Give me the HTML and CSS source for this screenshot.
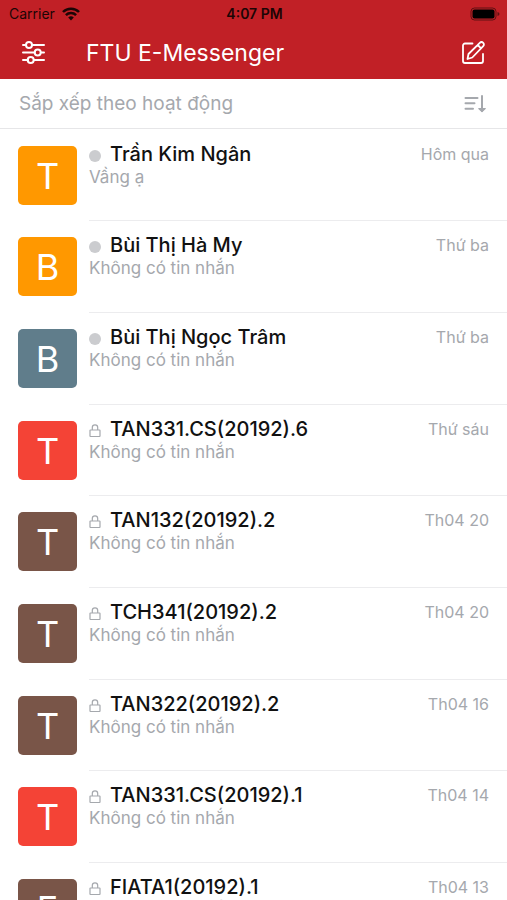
FILE: index.html
```html
<!DOCTYPE html>
<html lang="vi">
<head>
    <meta charset="UTF-8">
    <meta name="viewport" content="width=device-width, initial-scale=1.0">
    <title>FTU E-Messenger</title>
    <link rel="stylesheet" href="styles.css">
</head>
<body>

    <!-- Lock icon shared by the group chats -->
    <svg class="sprite" aria-hidden="true">
        <symbol id="lock" viewBox="0 0 12 14">
            <path d="M1.500 6h9a.5.5 0 0 1 .5.5v5.500a.5.5 0 0 1-.5.5h-9a.5.5 0 0 1-.5-.5V6.500a.5.5 0 0 1 .5-.5zM3.300 6V3.500a2.700 2.700 0 0 1 5.400 0V6" fill="none" stroke="currentColor" stroke-width="1.200"/>
        </symbol>
    </svg>

    <div class="app">
        <!-- Top Bar -->
        <header class="top">
            <div class="status">
                <div class="carrier">
                    Carrier
                    <svg width="18" height="14" viewBox="0 0 18 14">
                        <path d="M1 5a11.200 11.200 0 0 1 16 0M3.900 8.200a7.200 7.200 0 0 1 10.200 0" fill="none" stroke="currentColor" stroke-width="2.500"/>
                        <path d="M9 13.500L6.200 10.600a4 4 0 0 1 5.600 0z" fill="currentColor"/>
                    </svg>
                </div>
                <div class="time">4:07 PM</div>
                <div class="battery">
                    <svg width="30" height="14" viewBox="0 0 30 14">
                        <rect x="1" y="1" width="25" height="12" rx="3.500" fill="none" stroke="currentColor" opacity=".5"/>
                        <rect x="2.500" y="2.500" width="22" height="9" rx="2" fill="currentColor"/>
                        <path d="M27.500 5v4q2-.6 2-2t-2-2z" fill="currentColor" opacity=".5"/>
                    </svg>
                </div>
            </div>
            <div class="nav">
                <button class="icon-btn" aria-label="Bộ lọc">
                    <svg width="24" height="24" viewBox="0 0 24 24" fill="none" stroke="currentColor" stroke-width="2" stroke-linecap="round">
                        <path d="M1 4H4M10 4h12M1 11.500H12.500M19 11.500h3M1 19H6M12 19h10"/>
                        <circle cx="7" cy="4" r="3"/>
                        <circle cx="15.700" cy="11.500" r="3"/>
                        <circle cx="8.700" cy="19" r="3"/>
                    </svg>
                </button>
                <h1>FTU E-Messenger</h1>
                <button class="icon-btn" aria-label="Tin nhắn mới">
                    <svg width="24" height="24" viewBox="0 0 24 24" fill="none" stroke="currentColor" stroke-width="1.800" stroke-linejoin="round" stroke-linecap="round">
                        <path d="M11.500 2.500H4a2 2 0 0 0-2 2V20a2 2 0 0 0 2 2H20a2 2 0 0 0 2-2v-7"/>
                        <path d="M6.500 18l1-5L18.800 1.800a2.400 2.400 0 0 1 3.400 3.400L11.300 16.500zM16.700 4l3.400 3.400"/>
                    </svg>
                </button>
            </div>
        </header>

        <!-- Sort Bar -->
        <div class="sort">
            <span id="sortLabel">Sắp xếp theo hoạt động</span>
            <button class="icon-btn" aria-labelledby="sortLabel">
                <svg width="24" height="24" viewBox="0 0 24 24" fill="none" stroke="currentColor" stroke-width="2" stroke-linecap="round" stroke-linejoin="round">
                    <path d="M2.500 6h12M2.500 11.300h9M2.500 16.700h7.500M19 4v15"/>
                    <path d="M15.800 16.500l3.200 3.200 3.200-3.200z" fill="currentColor" stroke-width="1.200"/>
                </svg>
            </button>
        </div>

        <!-- Chat List -->
        <ul class="chats">
            <li>
                <a class="chat" href="#">
                    <span class="avatar orange">T</span>
                    <span class="info">
                        <span class="line"><span class="mark"><span class="dot"></span></span><span class="name">Trần Kim Ngân</span><span class="date">Hôm qua</span></span>
                        <span class="message">Vầng ạ</span>
                    </span>
                </a>
            </li>
            <li>
                <a class="chat" href="#">
                    <span class="avatar orange">B</span>
                    <span class="info">
                        <span class="line"><span class="mark"><span class="dot"></span></span><span class="name">Bùi Thị Hà My</span><span class="date">Thứ ba</span></span>
                        <span class="message">Không có tin nhắn</span>
                    </span>
                </a>
            </li>
            <li>
                <a class="chat" href="#">
                    <span class="avatar slate">B</span>
                    <span class="info">
                        <span class="line"><span class="mark"><span class="dot"></span></span><span class="name">Bùi Thị Ngọc Trâm</span><span class="date">Thứ ba</span></span>
                        <span class="message">Không có tin nhắn</span>
                    </span>
                </a>
            </li>
            <li>
                <a class="chat" href="#">
                    <span class="avatar red">T</span>
                    <span class="info">
                        <span class="line"><span class="mark"><svg class="lock"><use href="#lock"/></svg></span><span class="name">TAN331.CS(20192).6</span><span class="date">Thứ sáu</span></span>
                        <span class="message">Không có tin nhắn</span>
                    </span>
                </a>
            </li>
            <li>
                <a class="chat" href="#">
                    <span class="avatar brown">T</span>
                    <span class="info">
                        <span class="line"><span class="mark"><svg class="lock"><use href="#lock"/></svg></span><span class="name">TAN132(20192).2</span><span class="date">Th04 20</span></span>
                        <span class="message">Không có tin nhắn</span>
                    </span>
                </a>
            </li>
            <li>
                <a class="chat" href="#">
                    <span class="avatar brown">T</span>
                    <span class="info">
                        <span class="line"><span class="mark"><svg class="lock"><use href="#lock"/></svg></span><span class="name">TCH341(20192).2</span><span class="date">Th04 20</span></span>
                        <span class="message">Không có tin nhắn</span>
                    </span>
                </a>
            </li>
            <li>
                <a class="chat" href="#">
                    <span class="avatar brown">T</span>
                    <span class="info">
                        <span class="line"><span class="mark"><svg class="lock"><use href="#lock"/></svg></span><span class="name">TAN322(20192).2</span><span class="date">Th04 16</span></span>
                        <span class="message">Không có tin nhắn</span>
                    </span>
                </a>
            </li>
            <li>
                <a class="chat" href="#">
                    <span class="avatar red">T</span>
                    <span class="info">
                        <span class="line"><span class="mark"><svg class="lock"><use href="#lock"/></svg></span><span class="name">TAN331.CS(20192).1</span><span class="date">Th04 14</span></span>
                        <span class="message">Không có tin nhắn</span>
                    </span>
                </a>
            </li>
            <li>
                <a class="chat" href="#">
                    <span class="avatar brown">F</span>
                    <span class="info">
                        <span class="line"><span class="mark"><svg class="lock"><use href="#lock"/></svg></span><span class="name">FIATA1(20192).1</span><span class="date">Th04 13</span></span>
                        <span class="message">Không có tin nhắn</span>
                    </span>
                </a>
            </li>
        </ul>
    </div>

</body>
</html>
```
FILE: styles.css
```css
/* General Styling */
* {
    box-sizing: border-box;
}

body {
    margin: 0;
    font-family: Inter, "Liberation Sans", sans-serif;
    background-color: white;
    color: #111;
}

svg {
    display: block;
}

.sprite {
    display: none;
}

.app {
    display: flex;
    flex-direction: column;
    height: 100vh;
}

.icon-btn {
    padding: 0;
    border: none;
    background: none;
    color: inherit;
    cursor: pointer;
}

/* Top Bar */
.top {
    background-color: #c12026;
    color: white;
}

.status {
    display: grid;
    grid-template-columns: 1fr auto 1fr;
    align-items: center;
    height: 27px;
    padding: 0 7px 0 9px;
    font-size: 14px;
    color: #1c0505;
}

.carrier {
    display: flex;
    align-items: center;
    gap: 7px;
}

.time {
    font-weight: 600;
}

.battery {
    justify-self: end;
    color: black;
}

.nav {
    display: flex;
    align-items: center;
    height: 52px;
    padding: 0 22px;
}

h1 {
    flex: 1;
    margin: 0 0 0 40px;
    font-size: 23px;
    font-weight: 400;
}

/* Sort Bar */
.sort {
    display: flex;
    justify-content: space-between;
    align-items: center;
    height: 50px;
    padding: 0 20px 0 19px;
    border-bottom: 1px solid #e6e6e8;
    font-size: 19px;
    color: #a5a8ad;
}

/* Chat List */
.chats {
    flex: 1;
    margin: 0;
    padding: 1px 0 0;
    list-style: none;
    overflow-y: auto;
    scrollbar-width: none;
}

.chat {
    display: flex;
    gap: 12px;
    height: 92px;
    padding-left: 18px;
    color: inherit;
    text-decoration: none;
}

li:nth-child(3n + 1) .chat {
    height: 91px;
}

.avatar {
    display: flex;
    justify-content: center;
    align-items: center;
    width: 59px;
    height: 59px;
    margin-top: 16px;
    border-radius: 5px;
    font-size: 36px;
    color: white;
}

.orange {
    background-color: #ff9800;
}

.slate {
    background-color: #607d8b;
}

.red {
    background-color: #f44336;
}

.brown {
    background-color: #795548;
}

.info {
    flex: 1;
    padding: 12px 18px 0 0;
    border-bottom: 1px solid #ececee;
}

.line {
    display: flex;
    align-items: center;
    height: 24px;
}

.mark {
    width: 21px;
    padding-top: 3px;
}

.dot {
    display: block;
    width: 12px;
    height: 12px;
    border-radius: 50%;
    background-color: #cbcccf;
}

.lock {
    width: 12px;
    height: 14px;
    color: #a5a8ad;
}

.name {
    flex: 1;
    font-size: 20px;
    font-weight: 500;
}

.date {
    font-size: 16px;
    color: #a5a8ad;
}

.message {
    display: block;
    font-size: 17px;
    line-height: 22px;
    color: #a5a8ad;
}
```
